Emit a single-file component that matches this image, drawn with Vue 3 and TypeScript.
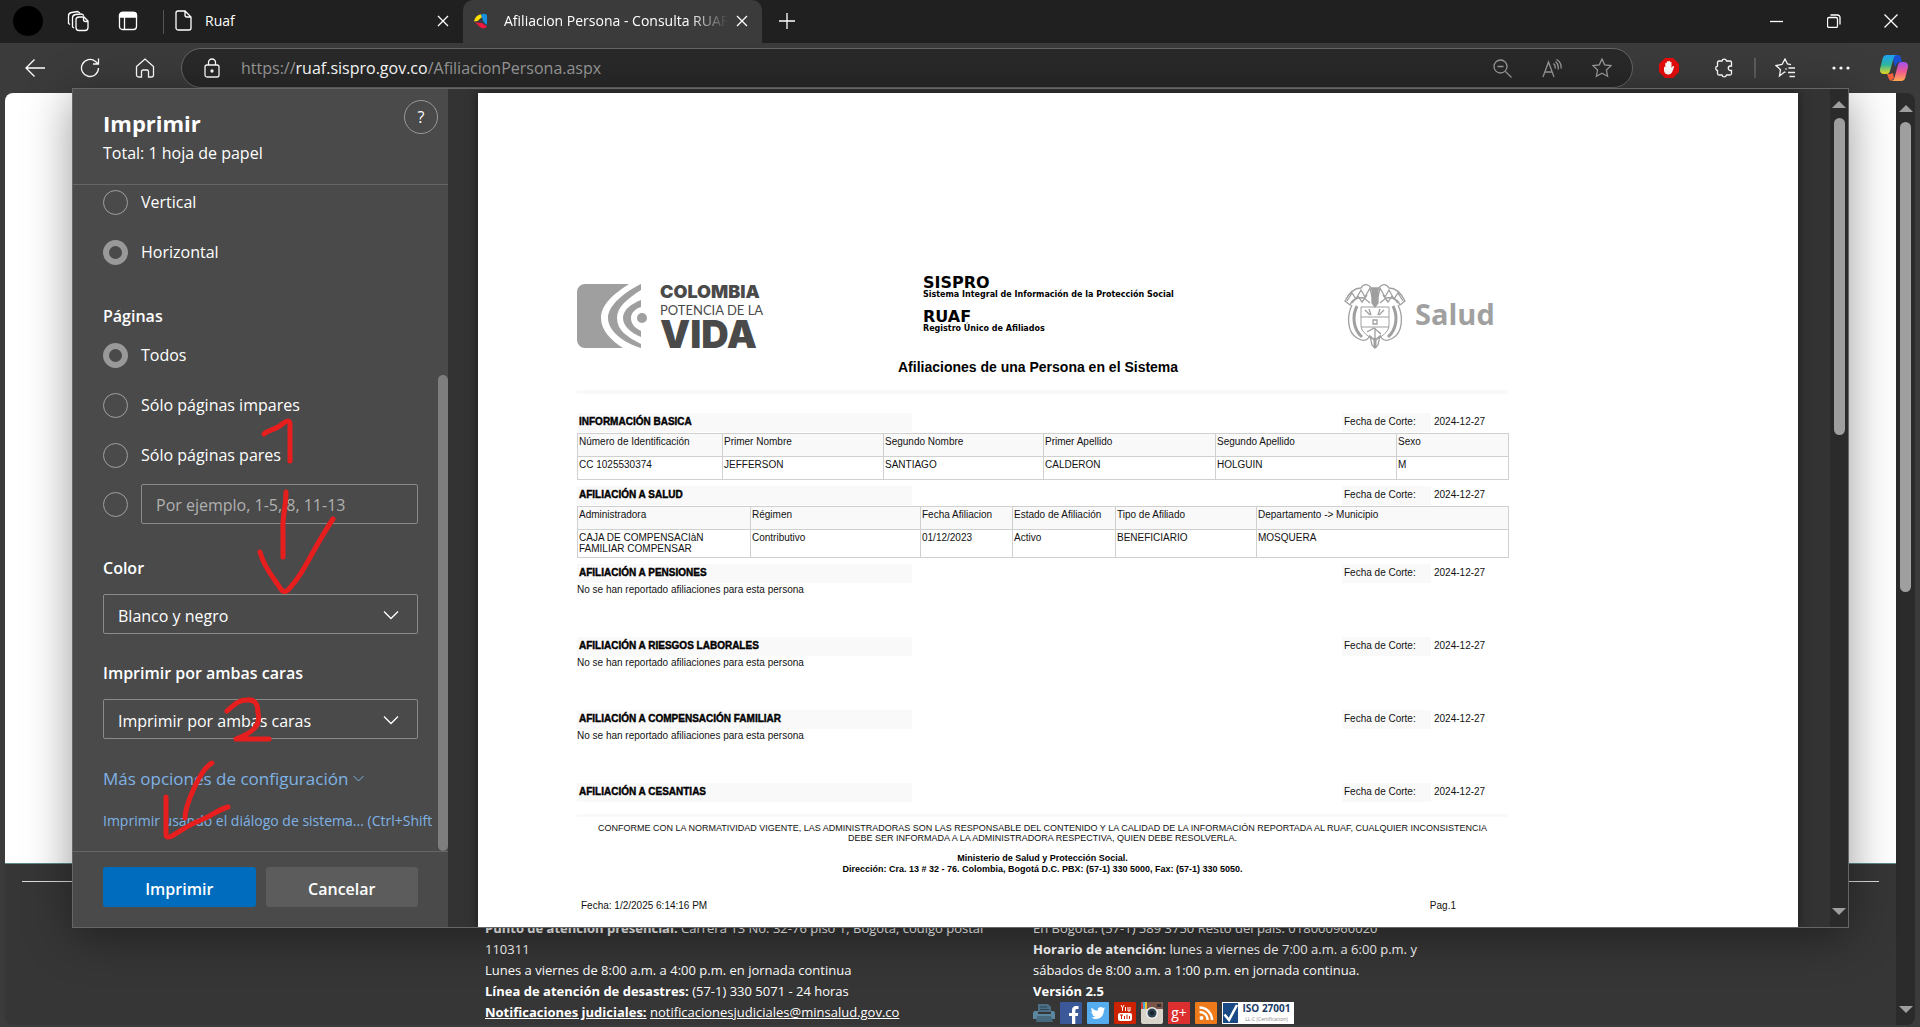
<script setup lang="ts">
import { ref } from 'vue'

interface Section {
  title: string
  note?: string
}

interface Column {
  head: string
  cell: string
  width: number
}

const orientation = ref('horizontal')
const pages = ref('todos')
const range = ref('')
const color = ref('bn')
const duplex = ref('ambas')

const cutDate = '2024-12-27'

const person: Column[] = [
  { head: 'Número de Identificación', cell: 'CC 1025530374', width: 145 },
  { head: 'Primer Nombre', cell: 'JEFFERSON', width: 161 },
  { head: 'Segundo Nombre', cell: 'SANTIAGO', width: 160 },
  { head: 'Primer Apellido', cell: 'CALDERON', width: 172 },
  { head: 'Segundo Apellido', cell: 'HOLGUIN', width: 181 },
  { head: 'Sexo', cell: 'M', width: 112 },
]

const health: Column[] = [
  { head: 'Administradora', cell: 'CAJA DE COMPENSACIàN FAMILIAR COMPENSAR', width: 173 },
  { head: 'Régimen', cell: 'Contributivo', width: 170 },
  { head: 'Fecha Afiliacion', cell: '01/12/2023', width: 92 },
  { head: 'Estado de Afiliación', cell: 'Activo', width: 103 },
  { head: 'Tipo de Afiliado', cell: 'BENEFICIARIO', width: 141 },
  { head: 'Departamento -> Municipio', cell: 'MOSQUERA', width: 252 },
]

const empty = 'No se han reportado afiliaciones para esta persona'
const sections: Section[] = [
  { title: 'AFILIACIÓN A PENSIONES', note: empty },
  { title: 'AFILIACIÓN A RIESGOS LABORALES', note: empty },
  { title: 'AFILIACIÓN A COMPENSACIÓN FAMILIAR', note: empty },
  { title: 'AFILIACIÓN A CESANTIAS' },
]
</script>

<template>
  <div class="browser">
    <header class="tabbar">
      <button class="tb-btn" aria-label="Perfil"><span class="avatar"></span></button>
      <button class="tb-btn" aria-label="Áreas de trabajo">
        <svg width="22" height="22" viewBox="0 0 22 22" class="ico">
          <path d="M12 7h5l4 4v6.500a3 3 0 0 1-3 3h-6a3 3 0 0 1-3-3V10a3 3 0 0 1 3-3zM16.500 7v2.500a2 2 0 0 0 2 2H21" />
          <path d="M7 18 5.500 17V8a3.500 3.500 0 0 1 3-3.500l6-.5 2.500 1.500" />
          <path d="M3 14.500 1.500 13.500V6a3.500 3.500 0 0 1 3-3.500l6-1L13 3" />
        </svg>
      </button>
      <button class="tb-btn" aria-label="Pestañas verticales">
        <svg width="20" height="20" viewBox="0 0 20 20" class="ico">
          <rect x="1.500" y="1.500" width="17" height="17" rx="3" />
          <path d="M1.500 6V4.500a3 3 0 0 1 3-3h11a3 3 0 0 1 3 3V6z" fill="#fff" />
          <path d="M6.500 6v12" />
        </svg>
      </button>
      <span class="tab-sep"></span>
      <div class="tab">
        <svg width="17" height="21" viewBox="0 0 17 21" class="ico">
          <path d="M3 1h7l6 6v11a2 2 0 0 1-2 2H3a2 2 0 0 1-2-2V3a2 2 0 0 1 2-2zM10 1v4a2 2 0 0 0 2 2h4" />
        </svg>
        <span class="tab-title">Ruaf</span>
        <button class="tab-close" aria-label="Cerrar pestaña">
          <svg width="12" height="12" viewBox="0 0 12 12" class="ico"><path d="M1 1l10 10M11 1 1 11" /></svg>
        </button>
      </div>
      <div class="tab active">
        <svg width="14" height="16" viewBox="0 0 14 16">
          <path d="M0 8.500C1 4 4 1.500 7 1.500L8 4 3.500 8z" fill="#ffe000" />
          <path d="M7 1.500C10 0 13 1 13 3v9L9.500 9z" fill="#1590e0" />
          <path d="M1 9.500 8 10l5 3.500C11 16 8 15.500 6 14z" fill="#f01840" />
        </svg>
        <span class="tab-title fade">Afiliacion Persona - Consulta RUAF</span>
        <button class="tab-close" aria-label="Cerrar pestaña">
          <svg width="12" height="12" viewBox="0 0 12 12" class="ico"><path d="M1 1l10 10M11 1 1 11" /></svg>
        </button>
      </div>
      <button class="tb-btn" aria-label="Nueva pestaña">
        <svg width="18" height="18" viewBox="0 0 18 18" class="ico"><path d="M9 1v16M1 9h16" /></svg>
      </button>
      <div class="win">
        <button class="win-btn" aria-label="Minimizar">
          <svg width="14" height="14" viewBox="0 0 14 14" class="ico"><path d="M0 7.500h13" /></svg>
        </button>
        <button class="win-btn" aria-label="Restaurar">
          <svg width="14" height="14" viewBox="0 0 14 14" class="ico">
            <rect x=".5" y="3.500" width="10" height="10" rx="1.500" />
            <path d="M3.500 1h7a2.500 2.500 0 0 1 2.500 2.500v7" />
          </svg>
        </button>
        <button class="win-btn" aria-label="Cerrar">
          <svg width="14" height="14" viewBox="0 0 14 14" class="ico"><path d="M.5.5l13 13M13.500.5l-13 13" /></svg>
        </button>
      </div>
    </header>

    <nav class="toolbar">
      <button class="nav-btn" aria-label="Atrás">
        <svg width="20" height="18" viewBox="0 0 20 18" class="ico"><path d="M20 9H1M9.500.5 1 9l8.500 8.500" /></svg>
      </button>
      <button class="nav-btn" aria-label="Actualizar">
        <svg width="20" height="20" viewBox="0 0 20 20" class="ico"><path d="M18.500 10a8.500 8.500 0 1 1-3-6.500L18.500 6M18.500.5V6H13" /></svg>
      </button>
      <button class="nav-btn" aria-label="Inicio">
        <svg width="20" height="20" viewBox="0 0 20 20" class="ico">
          <path d="M1.500 8.500 10 1l8.500 7.500V17a2 2 0 0 1-2 2h-3v-5.500a1.500 1.500 0 0 0-1.500-1.500H8a1.500 1.500 0 0 0-1.500 1.500V19h-3a2 2 0 0 1-2-2z" />
        </svg>
      </button>
      <div class="address">
        <svg width="16" height="20" viewBox="0 0 16 20" class="ico">
          <rect x="1" y="7" width="14" height="12" rx="2" /><path d="M4.500 7V4.500a3.500 3.500 0 0 1 7 0V7" />
          <circle cx="8" cy="13" r="1" fill="#fff" />
        </svg>
        <span class="url">https://<b>ruaf.sispro.gov.co</b>/AfiliacionPersona.aspx</span>
        <button class="pill-btn" aria-label="Alejar">
          <svg width="19" height="19" viewBox="0 0 19 19" class="ico dim"><circle cx="7.500" cy="7.500" r="6.500" /><path d="M12.500 12.500l6 6M4.500 7.500h6" /></svg>
        </button>
        <button class="pill-btn" aria-label="Leer en voz alta">
          <svg width="20" height="19" viewBox="0 0 20 19" class="ico dim">
            <path d="M1 18 6.500 3 12 18M3 13h7M11.500 4.500a5 5 0 0 1 1.500 5M13.500 2.500a8 8 0 0 1 2.500 8M14.500.5a9 9 0 0 1 4.500 9" />
          </svg>
        </button>
        <button class="pill-btn" aria-label="Agregar a favoritos">
          <svg width="20" height="20" viewBox="0 0 20 20" class="ico dim"><path d="M10 1l2.700 5.800 6.300.8-4.600 4.400 1.200 6.300L10 15.200l-5.600 3.100 1.200-6.300L1 7.600l6.300-.8z" /></svg>
        </button>
      </div>
      <button class="nav-btn first" aria-label="Bloqueador">
        <svg width="20" height="20" viewBox="0 0 20 20">
          <path d="M6 0h8l6 6v8l-6 6H6l-6-6V6z" fill="#e80c0c" />
          <path d="M5 9.500c0-1 1.200-1 1.300 0V5.500c0-1 1.300-1 1.400 0V4c0-1 1.500-1 1.600 0v-.5c.1-1 1.600-1 1.700 0V4.500c0-1 1.500-1 1.500 0V10l1-1.500c.6-.9 1.900-.4 1.400.8C14 11.500 13.500 16 10 16.500 6.500 16.500 5 14.500 5 12z" fill="#fff" />
        </svg>
      </button>
      <button class="nav-btn" aria-label="Extensiones">
        <svg width="20" height="20" viewBox="0 0 20 20" class="ico">
          <path d="M5 3h3a2.300 2.300 0 0 1 4.500 0H16a1.500 1.500 0 0 1 1.500 1.500V8h-1a2.200 2.200 0 0 0 0 4.500h1v3A1.500 1.500 0 0 1 16 17h-3.500a2.300 2.300 0 0 1-4.500 0H5a1.500 1.500 0 0 1-1.500-1.500V12.500a2.300 2.300 0 0 1 0-4.500V4.500A1.500 1.500 0 0 1 5 3z" />
        </svg>
      </button>
      <span class="nav-sep"></span>
      <button class="nav-btn" aria-label="Favoritos">
        <svg width="21" height="20" viewBox="0 0 21 20" class="ico">
          <path d="M10.500 14.500 9.500 14l-5 4 1-6.300L1 7.500l6-1L10 1l2.500 5 3.500.6M13.500 10H20M13 14.500h7M11.500 10.500l-1 1M14.500 18.500H20" />
        </svg>
      </button>
      <button class="nav-btn" aria-label="Configuración y más">
        <svg width="18" height="4" viewBox="0 0 18 4"><circle cx="2" cy="2" r="1.600" fill="#fff" /><circle cx="9" cy="2" r="1.600" fill="#fff" /><circle cx="16" cy="2" r="1.600" fill="#fff" /></svg>
      </button>
      <button class="nav-btn copilot" aria-label="Copilot">
        <svg width="28" height="26" viewBox="0 0 28 26">
          <defs>
            <linearGradient id="cpA" x1="0" y1="0" x2="0" y2="1"><stop offset="0" stop-color="#1ea0f5" /><stop offset=".5" stop-color="#2ab5a0" /><stop offset="1" stop-color="#e8d820" /></linearGradient>
            <linearGradient id="cpB" x1="0" y1="0" x2="0" y2="1"><stop offset="0" stop-color="#a050f0" /><stop offset=".5" stop-color="#f05a90" /><stop offset="1" stop-color="#ffa850" /></linearGradient>
          </defs>
          <path d="M13 0h5c2 0 2.500 1.500 3 3l1 4h-4l-3 5-2-8z" fill="#1a50d0" />
          <path d="M7 0h10c-2 0-3 1.500-3.500 3.500L10 16c-.6 2-1.500 3-3.500 3H4c-3 0-4.500-2-4-5L2.500 4C3 1.500 4.500 0 7 0z" fill="url(#cpA)" />
          <path d="M7 19h3l3-1 1 5-3 3c-2-1-2.500-3-4-7z" fill="#f0603a" />
          <path d="M21 26H11c2 0 3-1.500 3.500-3.500L18 10c.6-2 1.500-3 3.500-3H24c3 0 4.500 2 4 5l-2.500 10c-.5 2.500-2 4-4.500 4z" fill="url(#cpB)" />
        </svg>
      </button>
    </nav>

    <div class="viewport">
      <main class="site">
        <div class="site-body"></div>
        <footer class="site-foot">
          <hr />
          <div class="foot-cols">
            <div class="foot-col">
              <p><b>Punto de atención presencial:</b> Carrera 13 No. 32-76 piso 1, Bogotá, código postal</p>
              <p>110311</p>
              <p>Lunes a viernes de 8:00 a.m. a 4:00 p.m. en jornada continua</p>
              <p><b>Línea de atención de desastres:</b> (57-1) 330 5071 - 24 horas</p>
              <p><a href="#"><b>Notificaciones judiciales:</b></a> <a href="#">notificacionesjudiciales@minsalud.gov.co</a></p>
            </div>
            <div class="foot-col">
              <p>En Bogotá: (57-1) 589 3750 Resto del país: 018000960020</p>
              <p><b>Horario de atención:</b> lunes a viernes de 7:00 a.m. a 6:00 p.m. y</p>
              <p>sábados de 8:00 a.m. a 1:00 p.m. en jornada continua.</p>
              <p><b>Versión 2.5</b></p>
              <div class="social">
                <a href="#" aria-label="Imprimir"><svg width="22" height="22" viewBox="0 0 22 22">
                  <path d="M5 2h10l3 3v5H5z" fill="#4a6f86" /><path d="M7 5h7M7 7.500h9" stroke="#2d4757" />
                  <path d="M2 9h3v3h13V9h2a2 2 0 0 1 2 2v6H0v-6a2 2 0 0 1 2-2z" fill="#5b87a0" /><path d="M4 14h14l2 6H3z" fill="#47697e" />
                </svg></a>
                <a href="#" aria-label="Facebook"><svg width="22" height="22" viewBox="0 0 22 22">
                  <rect width="22" height="22" rx="1" fill="#3b5998" /><path d="M12 22v-8H9v-3h3V8.500C12 5.500 13.500 4 16 4h2.500v3H17c-1.200 0-1.700.6-1.700 1.700V11h3l-.5 3h-2.500v8z" fill="#fff" />
                </svg></a>
                <a href="#" aria-label="Twitter"><svg width="22" height="22" viewBox="0 0 22 22">
                  <rect width="22" height="22" rx="1" fill="#55acee" /><path d="M4 15.500c2 .2 3-.3 4-1-1.500-.2-2.300-1-2.700-2h1.200C5 12 4.300 10.800 4.300 9.400l1.200.3C4.300 8.700 4 7 4.800 5.700c1.600 1.900 3.600 3 6 3.100C10.300 6.500 12 5 13.800 5c.9 0 1.700.4 2.200 1l2-.7-1.200 1.700 1.600-.4-1.500 1.500C17 13.500 13.500 17 9 17c-2 0-3.700-.6-5-1.500z" fill="#fff" />
                </svg></a>
                <a href="#" aria-label="YouTube"><svg width="22" height="22" viewBox="0 0 22 22">
                  <rect width="22" height="22" rx="1" fill="#cc2200" /><rect x="4" y="11" width="14" height="8" rx="2" fill="#fff" />
                  <path d="M7 3l1.500 3L10 3M8.500 6v3M11.500 5v4M14 5v4h2V5" stroke="#fff" fill="none" /><path d="M6 13h3M7.500 13v4M10.500 14v3M13 12.500v4.500M15.500 14v3" stroke="#c20" fill="none" />
                </svg></a>
                <a href="#" aria-label="Instagram"><svg width="22" height="22" viewBox="0 0 22 22">
                  <rect width="22" height="22" rx="2" fill="#d8d4cc" /><path d="M2 0h18a2 2 0 0 1 2 2v5H0V2a2 2 0 0 1 2-2z" fill="#7a5548" />
                  <path d="M2 0h2v7H2z" fill="#4aa8d8" /><path d="M4 0h2v7H4z" fill="#e8c030" /><path d="M0 1h2v6H0z" fill="#d84030" />
                  <circle cx="11" cy="11" r="6" fill="#eee" /><circle cx="11" cy="11" r="4.500" fill="#2c3f4c" /><circle cx="11" cy="11" r="2" fill="#17222a" /><rect x="16" y="2" width="4" height="3" fill="#333" />
                </svg></a>
                <a href="#" class="gplus" aria-label="Google+">g+</a>
                <a href="#" aria-label="RSS"><svg width="22" height="22" viewBox="0 0 22 22">
                  <rect width="22" height="22" rx="1" fill="#ee7a1a" /><circle cx="6.500" cy="16" r="2" fill="#fff" />
                  <path d="M4.500 10a7.500 7.500 0 0 1 8 8M4.500 5.500A12.500 12.500 0 0 1 17 18" stroke="#fff" stroke-width="2.500" fill="none" />
                </svg></a>
                <a href="#" class="iso" aria-label="ISO 27001">
                  <svg width="17" height="22" viewBox="0 0 17 22"><rect x="1" y="1" width="15" height="20" fill="#1a4a86" /><path d="M2.500 12.500 7 18l8-15" stroke="#fff" stroke-width="2.500" fill="none" /></svg>
                  <span><b>ISO 27001</b><small>LL-C (Certification)</small></span>
                </a>
              </div>
            </div>
          </div>
        </footer>
      </main>
      <div class="sbar outer"><i class="up"></i><i class="thumb"></i><i class="down"></i></div>
    </div>

    <section class="dialog" role="dialog" aria-label="Imprimir">
      <form class="panel" @submit.prevent>
        <header class="panel-head">
          <div>
            <h1>Imprimir</h1>
            <p>Total: 1 hoja de papel</p>
          </div>
          <button type="button" class="help" aria-label="Ayuda">?</button>
        </header>
        <div class="options">
          <div class="option-list">
            <label class="radio"><input v-model="orientation" type="radio" name="orientation" value="vertical" />Vertical</label>
            <label class="radio"><input v-model="orientation" type="radio" name="orientation" value="horizontal" />Horizontal</label>
            <h2 class="pages-title">Páginas</h2>
            <label class="radio"><input v-model="pages" type="radio" name="pages" value="todos" />Todos</label>
            <label class="radio"><input v-model="pages" type="radio" name="pages" value="impares" />Sólo páginas impares</label>
            <label class="radio"><input v-model="pages" type="radio" name="pages" value="pares" />Sólo páginas pares</label>
            <div class="range">
              <input v-model="pages" type="radio" name="pages" value="rango" aria-label="Rango de páginas" />
              <input v-model="range" type="text" placeholder="Por ejemplo, 1-5, 8, 11-13" aria-label="Páginas" />
            </div>
            <h2><label for="color">Color</label></h2>
            <div class="select">
              <select id="color" v-model="color"><option value="bn">Blanco y negro</option><option value="color">Color</option></select>
              <svg width="16" height="10" viewBox="0 0 16 10" class="ico"><path d="M1 1.500l7 7 7-7" /></svg>
            </div>
            <h2><label for="duplex">Imprimir por ambas caras</label></h2>
            <div class="select">
              <select id="duplex" v-model="duplex"><option value="ambas">Imprimir por ambas caras</option><option value="una">Imprimir por una cara</option></select>
              <svg width="16" height="10" viewBox="0 0 16 10" class="ico"><path d="M1 1.500l7 7 7-7" /></svg>
            </div>
            <a href="#" class="more">Más opciones de configuración
              <svg width="11" height="7" viewBox="0 0 11 7"><path d="M.5 1l5 5 5-5" fill="none" stroke="#7fb2e5" /></svg></a>
            <a href="#" class="system">Imprimir usando el diálogo de sistema... (Ctrl+Shift</a>
          </div>
          <div class="panel-scroll"><i></i></div>
        </div>
        <footer class="panel-foot">
          <button type="submit" class="primary">Imprimir</button>
          <button type="button">Cancelar</button>
        </footer>
        <svg class="ink" width="375" height="838" viewBox="73 89 375 838">
          <path d="M264 434C268 430 275 430 281 425S290 420 290 424V461" />
          <path d="M286 492C286 506 282 520 283 530V557" />
          <path d="M260 552C264 568 274 578 280 588Q284 594 288 590C304 574 312 550 333 519" />
          <path d="M227 711C237 702 240 700 247 700C255 699 258 704 258 713C261 726 252 733 236 739H269" />
          <path d="M212 763C200 769 185 806 185 818" />
          <path d="M166 797V834Q166 839 172 836C184 829 190 824 201 820C212 816 217 810 228 807" />
        </svg>
      </form>

      <div class="preview">
        <article class="sheet">
          <div class="doc">
            <div class="doc-head">
              <div class="vida">
                <svg width="70" height="64" viewBox="0 0 70 64">
                  <path d="M8 0H52C38 9 24 20 24 34C24 47 35 57 46 64H8a8 8 0 0 1-8-8V8a8 8 0 0 1 8-8z" fill="#9f9f9f" />
                  <path d="M64 0C48 8 31 21 31 34C31 47 47 59 64 64V60C50 53 40 46 40 34C40 23 50 15 64 6z" fill="#9f9f9f" />
                  <path d="M64 16C54 20 46 26 46 34C46 42 54 49 64 53V47C58 44 54 40 54 34C54 29 58 25 64 23z" fill="#9f9f9f" />
                  <circle cx="65" cy="34" r="5" fill="#9f9f9f" />
                </svg>
                <div class="vida-text"><span class="v1">COLOMBIA</span><span class="v2">POTENCIA DE LA</span><span class="v3">VIDA</span></div>
              </div>
              <div class="sispro">
                <strong>SISPRO</strong><small>Sistema Integral de Información de la Protección Social</small>
                <strong class="ruaf">RUAF</strong><small>Registro Único de Afiliados</small>
              </div>
              <div class="salud">
                <svg width="62" height="66" viewBox="0 0 62 66" fill="none" stroke="#9f9f9f" stroke-width="1.300">
                  <path d="M30 10C26 0 20 0 17 5C10 5 5 10 1 18L6 22C8 16 14 14 20 15L26 20M32 10C36 0 42 0 45 5C52 5 57 10 61 18L56 22C54 16 48 14 42 15L36 20" />
                  <path d="M3 18l5-8 4 6 5-9 4 7 5-9 2 9M59 18l-5-8-4 6-5-9-4 7-5-9-2 9M8 20l6-7 4 6 5-7M54 20l-6-7-4 6-5-7" />
                  <path d="M28 5h6v15l-3 4-3-4z" fill="#9f9f9f" />
                  <path d="M17 24h28v18C45 50 37 53 31 58C25 53 17 50 17 42zM17 34h28M17 44h28" stroke-width="1" />
                  <path d="M21 27l5 5M25 26l2 6M40 27l-5 5M36 26l-2 6M29 37h4v4h-4zM23 49l7-4 7 6M31 45v12" />
                  <path d="M13 23C8 33 9 46 18 54M49 23C54 33 53 46 44 54" stroke-width="3" />
                  <path d="M8 22C2 34 4 50 13 55C18 58 22 59 26 53M54 22C60 34 58 50 49 55C44 58 40 59 36 53" />
                  <path d="M26 53l5 4 5-4-2 9-3 3-3-3z" /><path d="M31 55v10" stroke-width="3" />
                </svg>
                <span>Salud</span>
              </div>
            </div>
            <h3>Afiliaciones de una Persona en el Sistema</h3>
            <div class="rule"></div>

            <div class="sec-head">
              <h4>INFORMACIÓN BASICA</h4><span class="cut">Fecha de Corte:</span><time>{{ cutDate }}</time>
            </div>
            <table>
              <colgroup><col v-for="c in person" :key="c.head" :style="{ width: c.width + 'px' }" /></colgroup>
              <thead><tr><th v-for="c in person" :key="c.head">{{ c.head }}</th></tr></thead>
              <tbody><tr><td v-for="c in person" :key="c.head">{{ c.cell }}</td></tr></tbody>
            </table>

            <div class="sec-head">
              <h4>AFILIACIÓN A SALUD</h4><span class="cut">Fecha de Corte:</span><time>{{ cutDate }}</time>
            </div>
            <table>
              <colgroup><col v-for="c in health" :key="c.head" :style="{ width: c.width + 'px' }" /></colgroup>
              <thead><tr><th v-for="c in health" :key="c.head">{{ c.head }}</th></tr></thead>
              <tbody><tr><td v-for="c in health" :key="c.head">{{ c.cell }}</td></tr></tbody>
            </table>

            <div v-for="s in sections" :key="s.title" class="section" :class="{ bare: !s.note }">
              <div class="sec-head">
                <h4>{{ s.title }}</h4><span class="cut">Fecha de Corte:</span><time>{{ cutDate }}</time>
              </div>
              <p v-if="s.note">{{ s.note }}</p>
            </div>

            <div class="legal">
              <p>CONFORME CON LA NORMATIVIDAD VIGENTE, LAS ADMINISTRADORAS SON LAS RESPONSABLE DEL CONTENIDO Y LA CALIDAD DE LA INFORMACIÓN REPORTADA AL RUAF, CUALQUIER INCONSISTENCIA<br />DEBE SER INFORMADA A LA ADMINISTRADORA RESPECTIVA, QUIEN DEBE RESOLVERLA.</p>
              <p class="ministry">Ministerio de Salud y Protección Social.<br />Dirección: Cra. 13 # 32 - 76. Colombia, Bogotá D.C. PBX: (57-1) 330 5000, Fax: (57-1) 330 5050.</p>
            </div>
            <div class="doc-foot"><span>Fecha: 1/2/2025 6:14:16 PM</span><span>Pag.1</span></div>
          </div>
        </article>
      </div>
      <div class="sbar inner"><i class="up"></i><i class="thumb"></i><i class="down"></i></div>
    </section>
  </div>
</template>

<style>
body {
  margin: 0;
  background: #3b3b3b;
}
</style>

<style scoped>
* {
  box-sizing: border-box;
}
.browser {
  position: relative;
  display: flex;
  flex-direction: column;
  height: 100vh;
  overflow: hidden;
  background: #3b3b3b;
  color: #fff;
  font-family: "Open Sans", "Noto Sans", sans-serif;
}
h1, h2, h3, h4, p, hr {
  margin: 0;
}
button {
  padding: 0;
  border: 0;
  background: none;
  color: inherit;
  font: inherit;
}
svg {
  display: block;
  flex: none;
}
.ico {
  fill: none;
  stroke: #fff;
  stroke-width: 1.3;
}
.ico.dim {
  stroke: #999;
}

/* Tab strip */
.tabbar {
  display: flex;
  align-items: center;
  height: 43px;
  padding-left: 3px;
  background: #202020;
}
.tb-btn {
  display: flex;
  align-items: center;
  justify-content: center;
  width: 50px;
  height: 43px;
  padding-bottom: 1px;
}
.avatar {
  width: 30px;
  height: 30px;
  border-radius: 50%;
  background: #000;
}
.tab-sep {
  width: 1px;
  height: 24px;
  margin-left: 10px;
  background: #555;
}
.tab {
  display: flex;
  align-items: center;
  width: 299px;
  height: 43px;
  padding: 0 10px 2px 11px;
  font-size: 14px;
}
.tab.active {
  border-radius: 10px 10px 0 0;
  background: #3b3b3b;
}
.tab-title {
  flex: 1;
  margin-left: 13px;
  overflow: hidden;
  white-space: nowrap;
}
.tab-title.fade {
  margin-left: 16px;
  mask-image: linear-gradient(90deg, #000 185px, transparent 224px);
}
.tab-close {
  display: flex;
  align-items: center;
  justify-content: center;
  width: 20px;
  height: 20px;
}
.win {
  display: flex;
  margin-left: auto;
}
.win-btn {
  display: flex;
  align-items: center;
  justify-content: center;
  width: 57px;
  height: 43px;
  padding: 0 2px 1px 0;
}

/* Toolbar */
.toolbar {
  display: flex;
  align-items: center;
  height: 50px;
  padding-left: 7px;
}
.nav-btn {
  display: flex;
  align-items: center;
  justify-content: center;
  width: 55px;
  height: 40px;
}
.nav-btn.first {
  margin-left: 8px;
}
.nav-btn.copilot {
  width: 52px;
}
.nav-sep {
  width: 2px;
  height: 20px;
  margin: 0 2px 0 3px;
  background: #5c5c5c;
}
.address {
  display: flex;
  flex: 1;
  align-items: center;
  height: 40px;
  margin-left: 9px;
  padding: 0 5px 0 22px;
  border: 1px solid #666;
  border-radius: 20px;
  background: #292929;
}
.url {
  flex: 1;
  margin-left: 21px;
  color: #999;
  font-size: 16px;
}
.url b {
  color: #fff;
  font-weight: 400;
}
.pill-btn {
  display: flex;
  align-items: center;
  justify-content: center;
  width: 50px;
  height: 30px;
}

/* Page behind the dialog */
.viewport {
  display: flex;
  flex: 1;
  min-height: 0;
  margin: 0 5px 2px;
  overflow: hidden;
  border-radius: 8px;
}
.site {
  display: flex;
  flex: 1;
  flex-direction: column;
  background: #363636;
}
.site-body {
  flex: 1;
  border-bottom: 1px solid #5a8a8a;
  background: #fff;
}
.site-foot {
  padding: 17px 17px 1px;
  font-size: 13px;
  line-height: 21px;
}
.site-foot hr {
  height: 1px;
  border: 0;
  background: #ddd;
}
.foot-cols {
  display: flex;
  padding: 36px 0 0 463px;
}
.foot-col {
  width: 548px;
  white-space: nowrap;
}
.foot-col a {
  color: #fff;
}
.social {
  display: flex;
  gap: 5px;
  height: 22px;
}
.social a {
  text-decoration: none;
}
.gplus {
  width: 22px;
  height: 22px;
  background: #dc2f2f;
  font-size: 14px;
  text-align: center;
}
.iso {
  display: flex;
  width: 72px;
  height: 22px;
  background: #fff;
}
.iso span {
  display: flex;
  flex: 1;
  flex-direction: column;
  align-items: center;
}
.iso b {
  color: #1a3a66;
  font-size: 10px;
  line-height: 12px;
}
.iso small {
  color: #888;
  font-size: 5px;
  line-height: 10px;
}

/* Scroll bars */
.sbar {
  display: flex;
  flex: none;
  flex-direction: column;
  align-items: center;
  width: 19px;
  padding: 12px 0;
  background: #2b2b2b;
}
.sbar i {
  display: block;
  flex: none;
}
.up, .down {
  border: 0 solid transparent;
  border-width: 0 7px;
}
.up {
  border-bottom: 7px solid #9f9f9f;
}
.down {
  margin-top: auto;
  border-top: 7px solid #9f9f9f;
}
.thumb {
  width: 11px;
  height: 470px;
  margin-top: 10px;
  border-radius: 6px;
  background: #9f9f9f;
}
.inner {
  width: 18px;
}
.inner .thumb {
  height: 317px;
}

/* Print dialog */
.dialog {
  position: absolute;
  top: 88px;
  right: 71px;
  bottom: 99px;
  left: 72px;
  display: flex;
  border: 1px solid #666;
  background: #333;
  box-shadow: 0 8px 44px rgba(0, 0, 0, 0.4);
}
.panel {
  position: relative;
  display: flex;
  flex: none;
  flex-direction: column;
  width: 375px;
  background: #4a4a4a;
  font-size: 16px;
}
.panel-head {
  display: flex;
  justify-content: space-between;
  height: 96px;
  padding: 18px 10px 0 30px;
  border-bottom: 1px solid #666;
}
.panel-head h1 {
  font-size: 22px;
  font-weight: 700;
  line-height: 32px;
}
.panel-head p {
  line-height: 28px;
}
.help {
  width: 34px;
  height: 34px;
  margin-top: -7px;
  border: 1px solid #999;
  border-radius: 50%;
}
.options {
  display: flex;
  flex: 1;
  min-height: 0;
}
.option-list {
  flex: 1;
  min-width: 0;
  padding-left: 30px;
  overflow: hidden;
}
.radio {
  display: flex;
  align-items: center;
  gap: 13px;
  height: 34px;
  margin-bottom: 16px;
}
input[type="radio"] {
  flex: none;
  width: 25px;
  height: 25px;
  margin: 0;
  border: 1px solid #a0a0a0;
  border-radius: 50%;
  appearance: none;
}
input[type="radio"]:checked {
  border: 6px solid #999;
}
h2 {
  margin: 27px 0 14px;
  font-size: 16px;
  font-weight: 600;
  line-height: 24px;
}
.pages-title {
  margin: 35px 0 10px;
}
.range {
  display: flex;
  align-items: center;
  gap: 13px;
  margin: -4px 20px 32px 0;
}
input[type="text"] {
  flex: 1;
  min-width: 0;
  height: 40px;
  padding: 2px 14px 0;
  border: 1px solid #8a8a8a;
  border-radius: 2px;
  background: none;
  color: #fff;
  font: inherit;
}
input::placeholder {
  color: #b0b0b0;
  opacity: 1;
}
.select {
  position: relative;
  margin-right: 20px;
}
select {
  display: block;
  width: 100%;
  height: 40px;
  padding: 4px 14px 0;
  border: 1px solid #8a8a8a;
  border-radius: 2px;
  background: #4a4a4a;
  color: #fff;
  font: inherit;
  appearance: none;
}
.select svg {
  position: absolute;
  top: 16px;
  right: 19px;
  pointer-events: none;
}
.more, .system {
  display: flex;
  align-items: center;
  gap: 5px;
  color: #7fb2e5;
  text-decoration: none;
  white-space: nowrap;
}
.more {
  height: 24px;
  margin: 27px 0 21px;
  font-size: 17px;
}
.system {
  font-size: 14px;
  line-height: 20px;
}
.panel-scroll {
  display: flex;
  align-items: flex-end;
  width: 10px;
}
.panel-scroll i {
  width: 10px;
  height: 476px;
  border-radius: 5px;
  background: #7e7e7e;
}
.panel-foot {
  display: flex;
  gap: 10px;
  height: 76px;
  padding: 15px 30px 0;
  border-top: 1px solid #666;
}
.panel-foot button {
  flex: 1;
  height: 40px;
  padding-top: 3px;
  border-radius: 3px;
  background: #5c5c5c;
  font-weight: 600;
}
.panel-foot .primary {
  background: #006cbe;
}
.ink {
  position: absolute;
  top: 0;
  left: 0;
  fill: none;
  stroke: #e61e1e;
  stroke-width: 5;
  stroke-linecap: round;
  stroke-linejoin: round;
  pointer-events: none;
}

/* Print preview */
.preview {
  display: flex;
  flex: 1;
  min-width: 0;
  padding: 4px 32px 0 30px;
  overflow: hidden;
}
.sheet {
  flex: 1;
  padding: 183px 0 0 99px;
  background: #fff;
  box-shadow: 0 0 10px rgba(0, 0, 0, 0.5);
  color: #111;
  font-family: "Liberation Sans", Arial, sans-serif;
  font-size: 10px;
  line-height: 11px;
}
.doc {
  width: 931px;
}
.doc-head {
  display: flex;
  height: 78px;
}
.vida {
  display: flex;
  gap: 13px;
  width: 346px;
  padding-top: 8px;
}
.vida-text {
  display: flex;
  flex-direction: column;
  color: #4a4a4a;
}
.v1 {
  font: 900 18px/16px Inter, sans-serif;
}
.v2 {
  font: 400 13px/20px Lato, sans-serif;
}
.v3 {
  font: 900 38px/28px Inter, sans-serif;
}
.sispro {
  display: flex;
  flex-direction: column;
  width: 421px;
  color: #000;
  font-family: "DejaVu Sans", sans-serif;
}
.sispro strong {
  font-size: 16px;
  line-height: 14px;
}
.sispro .ruaf {
  margin-top: 11px;
}
.sispro small {
  font-size: 8px;
  font-weight: 700;
  line-height: 9px;
}
.salud {
  display: flex;
  gap: 9px;
  padding-top: 7px;
  color: #a0a0a0;
  font: 700 29px/62px "Open Sans", sans-serif;
}
h3 {
  padding-left: 321px;
  color: #000;
  font-size: 14px;
  line-height: 26px;
}
.rule {
  height: 4px;
  margin: 10px 0 19px;
  background: #f9f9f9;
}
.sec-head {
  display: flex;
  height: 20px;
}
h4 {
  width: 335px;
  height: 19px;
  margin-right: auto;
  padding-left: 2px;
  background: #f9f9f9;
  color: #000;
  font-size: 10px;
  line-height: 17px;
  -webkit-text-stroke: 0.4px #000;
}
.cut {
  width: 89px;
  height: 19px;
  padding-left: 2px;
  background: #f9f9f9;
  line-height: 17px;
}
time {
  width: 77px;
  padding-left: 3px;
  line-height: 17px;
}
table {
  width: 931px;
  margin-bottom: 6px;
  border-collapse: collapse;
  table-layout: fixed;
}
th, td {
  height: 23px;
  padding: 2px 0 0 1px;
  border: 1px solid #d0d0d0;
  font-weight: 400;
  text-align: left;
  vertical-align: top;
}
th {
  background: #f9f9f9;
}
td {
  padding: 2px 20px 3px 1px;
}
.section {
  height: 73px;
}
.section p {
  line-height: 12px;
}
.section.bare {
  height: 31px;
}
.legal {
  padding-top: 6px;
  border-top: 3px solid #f9f9f9;
  font-size: 9px;
  line-height: 10px;
  text-align: center;
  white-space: nowrap;
}
.ministry {
  margin-top: 10px;
  color: #000;
  font-weight: 700;
  line-height: 11px;
}
.doc-foot {
  display: flex;
  justify-content: space-between;
  padding: 25px 52px 0 4px;
}
</style>
